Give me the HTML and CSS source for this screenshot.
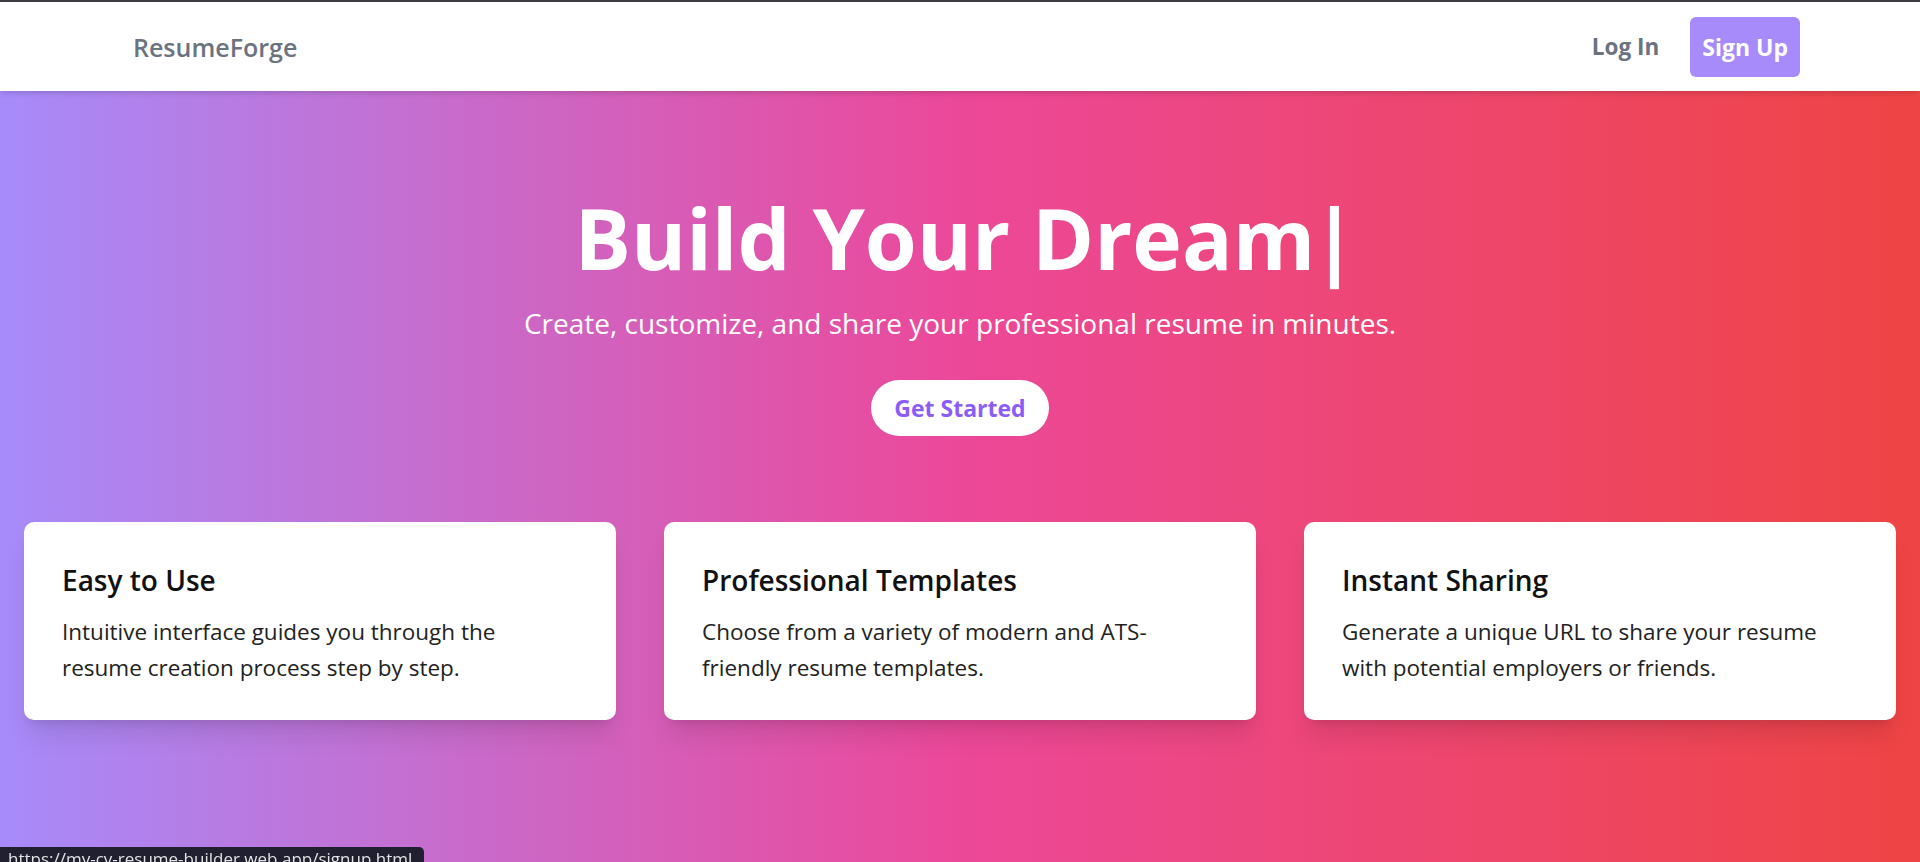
FILE: index.html
```html
<!DOCTYPE html>
<html lang="en">
<head>
<meta charset="utf-8">
<title>ResumeForge</title>
<link rel="stylesheet" href="styles.css">
</head>
<body>
<div class="chrome-line"></div>
<nav class="nav">
  <a class="logo" href="#">ResumeForge</a>
  <div class="nav-links">
    <a class="login" href="#">Log In</a>
    <a class="signup" href="#">Sign Up</a>
  </div>
</nav>
<main class="hero">
  <h1 class="title">Build Your Dream<span class="cursor">|</span></h1>
  <p class="subtitle">Create, customize, and share your professional resume in minutes.</p>
  <a class="cta" href="#">Get Started</a>
  <section class="features">
    <div class="card">
      <h2 class="card-title">Easy to Use</h2>
      <p class="card-text">Intuitive interface guides you through the resume creation process step by step.</p>
    </div>
    <div class="card">
      <h2 class="card-title">Professional Templates</h2>
      <p class="card-text">Choose from a variety of modern and ATS-friendly resume templates.</p>
    </div>
    <div class="card">
      <h2 class="card-title">Instant Sharing</h2>
      <p class="card-text">Generate a unique URL to share your resume with potential employers or friends.</p>
    </div>
  </section>
</main>
<div class="status">https://my-cv-resume-builder.web.app/signup.html</div>
</body>
</html>
```

FILE: styles.css
```css
* { box-sizing: border-box; }
html, body { margin: 0; padding: 0; height: 100%; }
body {
  font-family: "Open Sans", "Noto Sans", sans-serif;
  overflow: hidden;
  background: linear-gradient(to right, #a78bfa, #ec4899, #ef4444);
}
a { text-decoration: none; }

.chrome-line { height: 2px; background: #3c3c41; }

.nav {
  position: relative;
  z-index: 2;
  height: 89px;
  background: #fff;
  display: flex;
  align-items: center;
  justify-content: space-between;
  padding: 0 120px 0 133px;
  box-shadow: 0 4px 6px -1px rgba(0,0,0,0.1), 0 2px 4px -2px rgba(0,0,0,0.1);
}
.logo {
  font-size: 25px;
  font-weight: 600;
  color: #6b7280;
  line-height: 32px;
}
.nav-links { display: flex; align-items: center; gap: 31px; }
.login {
  font-size: 22.5px;
  font-weight: 700;
  color: #6b7280;
  line-height: 32px;
}
.signup {
  font-size: 23px;
  font-weight: 700;
  color: #fff;
  background: #a78bfa;
  line-height: 32px;
  padding: 14px 12px;
  border-radius: 6px;
}

.hero {
  background: linear-gradient(to right, #a78bfa, #ec4899, #ef4444);
  min-height: calc(100vh - 91px);
  display: flex;
  flex-direction: column;
  align-items: center;
  padding-top: 105px;
}
.title {
  margin: 0;
  font-size: 84px;
  line-height: 84px;
  font-weight: 700;
  color: #fff;
  text-align: center;
}
.cursor {
  font-weight: 700;
  display: inline-block;
  margin-left: -4px;
  margin-right: -12px;
}
.subtitle {
  margin: 25px 0 0;
  font-size: 28px;
  line-height: 36px;
  color: #fff;
  text-align: center;
}
.cta {
  margin-top: 39px;
  background: #fff;
  color: #8b5cf6;
  font-size: 23px;
  font-weight: 700;
  line-height: 32px;
  padding: 12px 23px;
  border-radius: 9999px;
}
.features {
  align-self: stretch;
  margin-top: 86px;
  padding: 0 24px;
  display: grid;
  grid-template-columns: repeat(3, 1fr);
  gap: 48px;
}
.card {
  background: #fff;
  border-radius: 10px;
  padding: 40px 64px 34px 38px;
  box-shadow: 0 20px 25px -5px rgba(0,0,0,0.1), 0 8px 10px -6px rgba(0,0,0,0.1);
}
.card-title {
  margin: 0;
  font-size: 28px;
  line-height: 36px;
  font-weight: 600;
  color: #111;
}
.card-text {
  margin: 16px 0 0;
  font-size: 22.5px;
  line-height: 36px;
  color: #222;
}

.status {
  position: fixed;
  left: 0;
  bottom: 0;
  height: 15px;
  overflow: hidden;
  padding: 1px 12px 0 8px;
  background: #202030;
  color: #e3e3e3;
  font-size: 17px;
  line-height: 22px;
  border-top-right-radius: 5px;
  z-index: 5;
}
```
